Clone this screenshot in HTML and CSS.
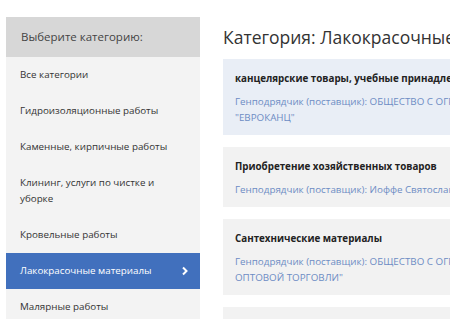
FILE: index.html
```html
<!DOCTYPE html>
<html lang="ru">
<head>
    <meta charset="UTF-8">
    <meta name="viewport" content="width=device-width, initial-scale=1.0">
    <title>Категория: Лакокрасочные материалы</title>
    <link rel="stylesheet" href="styles.css">
</head>
<body>
    <div class="page">
        <!-- Sidebar with categories -->
        <aside class="sidebar">
            <div class="sidebar-title">Выберите категорию:</div>
            <ul class="cat-list">
                <li><a href="#">Все категории</a></li>
                <li><a href="#">Гидроизоляционные работы</a></li>
                <li><a href="#">Каменные, кирпичные работы</a></li>
                <li><a href="#">Клининг, услуги по чистке и уборке</a></li>
                <li><a href="#">Кровельные работы</a></li>
                <li class="active">
                    <a href="#">Лакокрасочные материалы
                        <svg class="chevron" width="8" height="10" viewBox="0 0 8 10">
                            <polyline points="2,1.5 5.5,5 2,8.5" fill="none" stroke="#fff" stroke-width="2"/>
                        </svg>
                    </a>
                </li>
                <li><a href="#">Малярные работы</a></li>
            </ul>
        </aside>

        <!-- Contracts list -->
        <main class="content">
            <h1>Категория: Лакокрасочные материалы</h1>

            <div class="card card-blue">
                <div class="card-title">канцелярские товары, учебные принадлежности</div>
                <a class="card-link" href="#">Генподрядчик (поставщик): ОБЩЕСТВО С ОГРАНИЧЕННОЙ ОТВЕТСТВЕННОСТЬЮ ТОРГОВЫЙ ДОМ<br>"ЕВРОКАНЦ"</a>
            </div>

            <div class="card">
                <div class="card-title">Приобретение хозяйственных товаров</div>
                <a class="card-link" href="#">Генподрядчик (поставщик): Иоффе Святослав Александрович</a>
            </div>

            <div class="card">
                <div class="card-title">Сантехнические материалы</div>
                <a class="card-link" href="#">Генподрядчик (поставщик): ОБЩЕСТВО С ОГРАНИЧЕННОЙ ОТВЕТСТВЕННОСТЬЮ ЦЕНТР<br>ОПТОВОЙ ТОРГОВЛИ"</a>
            </div>

            <div class="card">
                <div class="card-title">Строительные материалы</div>
                <a class="card-link" href="#">Генподрядчик (поставщик): ОБЩЕСТВО С ОГРАНИЧЕННОЙ ОТВЕТСТВЕННОСТЬЮ</a>
            </div>
        </main>
    </div>
</body>
</html>
```

FILE: styles.css
```css
body {
    margin: 0;
    padding: 0;
    background-color: #fff;
    font-family: "Open Sans", "Noto Sans", sans-serif;
    overflow: hidden;
}

.page {
    display: flex;
    align-items: flex-start;
    width: 900px;
    padding: 17px 0 0 6px;
}

/* Sidebar */
.sidebar {
    width: 194px;
    flex-shrink: 0;
    background-color: #f3f3f3;
}

.sidebar-title {
    height: 40px;
    line-height: 40px;
    padding-left: 15px;
    background-color: #d7d7d7;
    color: #444;
    font-size: 11.5px;
}

.cat-list {
    list-style-type: none;
    margin: 0;
    padding: 0;
}

.cat-list li a {
    display: flex;
    justify-content: space-between;
    align-items: center;
    padding: 10px 11px 10px 14px;
    line-height: 16px;
    font-size: 9.8px;
    color: #333;
    text-decoration: none;
}

.cat-list li:nth-child(4) a {
    padding-right: 40px;
}

.cat-list li.active a {
    background-color: #4170bd;
    color: #fff;
}

.chevron {
    flex-shrink: 0;
}

/* Content */
.content {
    flex: 1;
    margin-left: 23px;
}

.content h1 {
    margin: 0 0 6px;
    padding-top: 4px;
    font-size: 17.5px;
    font-weight: normal;
    line-height: 32px;
    color: #333;
    white-space: nowrap;
}

.card {
    background-color: #f2f2f2;
    padding: 12px 14px 9px 12px;
    margin-bottom: 12px;
}

.card-blue {
    background-color: #e9eef6;
}

.card-title {
    font-size: 9.8px;
    font-weight: bold;
    line-height: 16px;
    color: #222;
    margin-bottom: 7px;
    white-space: nowrap;
}

.card-link {
    display: block;
    font-size: 9.8px;
    line-height: 16px;
    color: #6d8cc4;
    text-decoration: none;
    white-space: nowrap;
}
```
